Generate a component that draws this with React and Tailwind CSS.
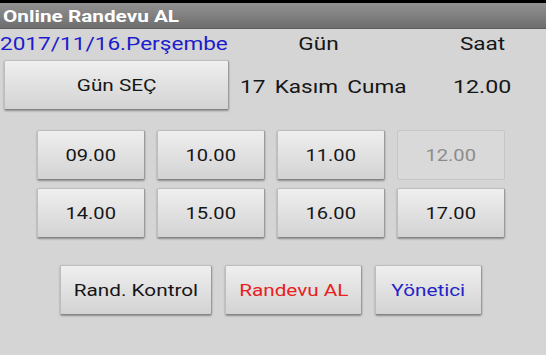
import React from "react";

const T = ({ children, className = "" }) => (
  <span className={`inline-block scale-x-[1.22] whitespace-nowrap ${className}`}>{children}</span>
);

const Btn = ({ children, className = "", disabled = false }) => (
  <div
    className={
      disabled
        ? `flex items-center justify-center pt-[2px] rounded-[2px] border border-[#c6c6c6] bg-[#d9d9d9] text-[#8c8c8c] ${className}`
        : `flex items-center justify-center pt-[2px] rounded-[2px] border border-[#bdbdbd] border-b-[#858585] border-r-[#9a9a9a] bg-linear-to-b from-[#efefef] to-[#d3d3d3] shadow-[0_1px_2px_rgba(0,0,0,0.35)] ${className}`
    }
  >
    {children}
  </div>
);

const times = [
  ["09.00", false],
  ["10.00", false],
  ["11.00", false],
  ["12.00", true],
  ["14.00", false],
  ["15.00", false],
  ["16.00", false],
  ["17.00", false],
];

export default function App() {
  return (
    <div className="w-[546px] h-[355px] overflow-hidden bg-[#d5d5d5] font-['Roboto',sans-serif] text-[#161616]">
      <div className="h-[3px] bg-black" />
      <div className="h-[26px] flex items-center pl-[3px] pt-[2px] bg-linear-to-b from-[#929292] to-[#6e6e6e] border-b border-[#5e5e5e]">
        <T className="origin-left text-[17px] font-bold text-white">Online Randevu AL</T>
      </div>

      <div className="flex items-center h-[30px] pt-[1px] text-[18.5px]">
        <div className="w-[240px]">
          <T className="origin-left text-[#1c1ccc]">2017/11/16.Perşembe</T>
        </div>
        <div className="w-[158px] flex justify-center">
          <T>Gün</T>
        </div>
        <div className="flex-1 flex justify-center pl-[22px]">
          <T>Saat</T>
        </div>
      </div>

      <div className="flex items-center mt-[1px] pl-[4px]">
        <Btn className="w-[225px] h-[50px] text-[17px]">
          <T>Gün SEÇ</T>
        </Btn>
        <div className="ml-[11px] w-[180px] pt-[5px] text-[18.5px]">
          <T className="origin-left [word-spacing:3px]">17 Kasım Cuma</T>
        </div>
        <div className="ml-[33px] pt-[5px] text-[19px]">
          <T className="origin-left">12.00</T>
        </div>
      </div>

      <div className="grid grid-cols-[repeat(4,108px)] gap-x-[12px] gap-y-[8px] pl-[37px] mt-[20px]">
        {times.map(([t, d]) => (
          <Btn key={t} disabled={d} className="h-[50px] text-[16.5px]">
            <T>{t}</T>
          </Btn>
        ))}
      </div>

      <div className="flex gap-[13px] pl-[60px] mt-[27px] text-[17px]">
        <Btn className="w-[152px] h-[50px]">
          <T>Rand. Kontrol</T>
        </Btn>
        <Btn className="w-[137px] h-[50px] text-[#e82020]">
          <T>Randevu AL</T>
        </Btn>
        <Btn className="w-[107px] h-[50px] text-[#2424c8]">
          <T>Yönetici</T>
        </Btn>
      </div>
    </div>
  );
}
